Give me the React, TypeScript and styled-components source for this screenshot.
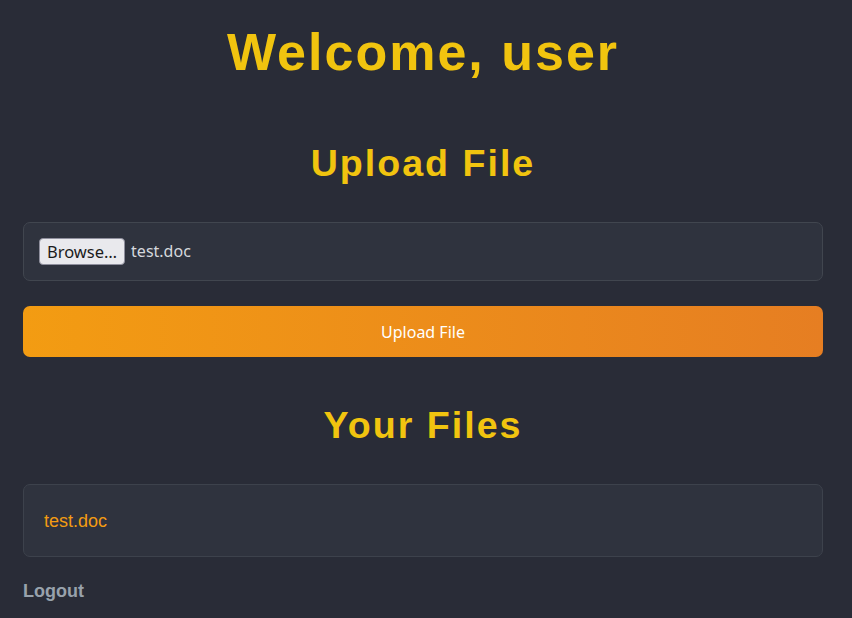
import React from "react";
import styled, { createGlobalStyle } from "styled-components";

const Global = createGlobalStyle`
  html, body { margin: 0; padding: 0; }
  body {
    background: #292c37;
    font-family: "Liberation Sans", Arial, sans-serif;
    min-height: 618px;
  }
`;

const Page = styled.div`
  padding: 0 29px 0 23px;
  display: flex;
  flex-direction: column;
`;

const Title = styled.h1`
  margin: 20px 0 0;
  font-family: "Liberation Sans", Arial, sans-serif;
  font-size: 52px;
  line-height: 64px;
  font-weight: 700;
  letter-spacing: 2px;
  color: #f1c40f;
  text-align: center;
`;

const Heading = styled.h2<{ $top: number }>`
  margin: ${(p) => p.$top}px 0 0;
  font-family: "Liberation Sans", Arial, sans-serif;
  font-size: 37.6px;
  line-height: 44px;
  font-weight: 700;
  letter-spacing: 2px;
  color: #f1c40f;
  text-align: center;
`;

const Form = styled.form`
  margin-top: 37px;
  display: flex;
  flex-direction: column;
  gap: 25px;
`;

const FileBox = styled.div`
  height: 59px;
  box-sizing: border-box;
  border: 1px solid #41464f;
  border-radius: 7px;
  background: #2f333e;
  display: flex;
  align-items: center;
  padding: 0 15px 1px;
  gap: 6px;
  font-family: "Noto Sans", sans-serif;
  font-size: 16px;
  color: #d5d8dd;
`;

const Browse = styled.span`
  display: inline-flex;
  align-items: center;
  height: 27px;
  box-sizing: border-box;
  padding: 0 7px;
  background: #e9e9ed;
  border: 1px solid #8f8f9d;
  border-radius: 4px;
  color: #1b1b1b;
  font-family: "Noto Sans", sans-serif;
  font-size: 16.5px;
`;

const UploadButton = styled.button`
  height: 51px;
  border: none;
  border-radius: 7px;
  background: linear-gradient(90deg, #f39c12 0%, #e67e22 100%);
  color: #fff;
  font-family: "Noto Sans", sans-serif;
  font-size: 16px;
  cursor: pointer;
`;

const FileList = styled.ul`
  list-style: none;
  margin: 37px 0 0;
  padding: 0;
`;

const FileItem = styled.li`
  height: 73px;
  box-sizing: border-box;
  border: 1px solid #3d424c;
  border-radius: 7px;
  background: #2f333e;
  display: flex;
  align-items: center;
  padding: 1px 20px 0;
`;

const FileLink = styled.a`
  color: #f39c12;
  font-family: "Liberation Sans", Arial, sans-serif;
  font-size: 18px;
  text-decoration: none;
`;

const Logout = styled.a`
  margin-top: 23px;
  align-self: flex-start;
  color: #98a2ac;
  font-family: "Liberation Sans", Arial, sans-serif;
  font-size: 18px;
  line-height: 22px;
  font-weight: 700;
  text-decoration: none;
`;

export default function App() {
  return (
    <>
      <Global />
      <Page>
        <Title>Welcome, user</Title>
        <Heading $top={57}>Upload File</Heading>
        <Form onSubmit={(e) => e.preventDefault()}>
          <FileBox>
            <Browse>Browse…</Browse>
            <span>test.doc</span>
          </FileBox>
          <UploadButton type="submit">Upload File</UploadButton>
        </Form>
        <Heading $top={46}>Your Files</Heading>
        <FileList>
          <FileItem>
            <FileLink href="#">test.doc</FileLink>
          </FileItem>
        </FileList>
        <Logout href="#">Logout</Logout>
      </Page>
    </>
  );
}
